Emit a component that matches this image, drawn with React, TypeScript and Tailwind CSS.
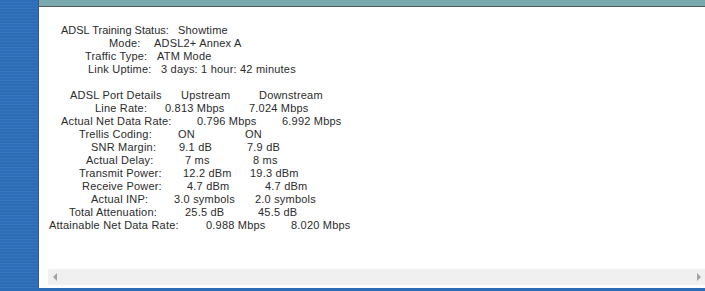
import React from "react";

const font = { fontFamily: '"Liberation Sans", Arial, sans-serif' };

function Row({ children }: { children: React.ReactNode }) {
  return <div className="flex h-[13px] leading-[13px] whitespace-nowrap">{children}</div>;
}

export default function App() {
  return (
    <div className="w-[705px] h-[291px] flex flex-col overflow-hidden bg-white" style={font}>
      <div className="flex flex-1 min-h-0">
        <div className="w-[38px] bg-[#2c6bb5] bg-[repeating-linear-gradient(180deg,#2d6cb6_0px,#2d6cb6_2px,#3574bd_2px,#3574bd_3px)]" />
        <div className="w-px bg-[#4f5558]" />
        <div className="flex-1 flex flex-col min-w-0">
          <div className="h-[6px] bg-[#79a9ac]" />
          <div className="h-px bg-[#56595b]" />
          <div className="flex-1 flex flex-col bg-white">
            <div className="pt-[17px] text-[11px] tracking-[0.2px] text-[#2b2b2b]">
              <Row>
                <span className="ml-[22px] w-[117px] tracking-normal">ADSL Training Status:</span>
                <span>Showtime</span>
              </Row>
              <Row>
                <span className="ml-[70px] w-[45px]">Mode:</span>
                <span>ADSL2+ Annex A</span>
              </Row>
              <Row>
                <span className="ml-[46px] w-[72px]">Traffic Type:</span>
                <span>ATM Mode</span>
              </Row>
              <Row>
                <span className="ml-[49px] w-[73px]">Link Uptime:</span>
                <span>3 days: 1 hour: 42 minutes</span>
              </Row>
              <Row>
                <span>&nbsp;</span>
              </Row>
              <Row>
                <span className="ml-[31px] w-[111px]">ADSL Port Details</span>
                <span className="w-[78px]">Upstream</span>
                <span>Downstream</span>
              </Row>
              <Row>
                <span className="ml-[56px] w-[70px]">Line Rate:</span>
                <span className="w-[84px]">0.813 Mbps</span>
                <span>7.024 Mbps</span>
              </Row>
              <Row>
                <span className="ml-[22px] w-[136px]">Actual Net Data Rate:</span>
                <span className="w-[85px]">0.796 Mbps</span>
                <span>6.992 Mbps</span>
              </Row>
              <Row>
                <span className="ml-[40px] w-[99px]">Trellis Coding:</span>
                <span className="w-[67px]">ON</span>
                <span>ON</span>
              </Row>
              <Row>
                <span className="ml-[52px] w-[88px]">SNR Margin:</span>
                <span className="w-[68px]">9.1 dB</span>
                <span>7.9 dB</span>
              </Row>
              <Row>
                <span className="ml-[47px] w-[99px]">Actual Delay:</span>
                <span className="w-[68px]">7 ms</span>
                <span>8 ms</span>
              </Row>
              <Row>
                <span className="ml-[40px] w-[104px]">Transmit Power:</span>
                <span className="w-[67px]">12.2 dBm</span>
                <span>19.3 dBm</span>
              </Row>
              <Row>
                <span className="ml-[43px] w-[105px]">Receive Power:</span>
                <span className="w-[78px]">4.7 dBm</span>
                <span>4.7 dBm</span>
              </Row>
              <Row>
                <span className="ml-[52px] w-[83px]">Actual INP:</span>
                <span className="w-[81px]">3.0 symbols</span>
                <span>2.0 symbols</span>
              </Row>
              <Row>
                <span className="ml-[30px] w-[116px]">Total Attenuation:</span>
                <span className="w-[73px]">25.5 dB</span>
                <span>45.5 dB</span>
              </Row>
              <Row>
                <span className="ml-[10px] w-[157px]">Attainable Net Data Rate:</span>
                <span className="w-[85px]">0.988 Mbps</span>
                <span>8.020 Mbps</span>
              </Row>
            </div>
            <div className="mt-auto ml-[9px] h-[16px] bg-[#f0f0f0] flex items-center justify-between pl-[5px] pr-[4px]">
              <svg width="4" height="8" viewBox="0 0 4 8">
                <polygon points="4,0 4,8 0,4" fill="#a3a3a3" />
              </svg>
              <svg width="4" height="8" viewBox="0 0 4 8">
                <polygon points="0,0 0,8 4,4" fill="#a3a3a3" />
              </svg>
            </div>
            <div className="h-[3px]" />
          </div>
        </div>
      </div>
      <div className="h-[3px] bg-[#2c6bb5]" />
    </div>
  );
}
